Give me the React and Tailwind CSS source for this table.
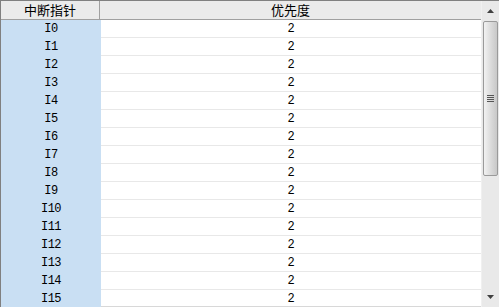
import React from "react";

const rows = Array.from({ length: 16 }, (_, i) => ({ name: `I${i}`, prio: 2 }));

const Scrollbar = () => (
  <div className="flex w-[18px] flex-col border-l border-[#f0f0f0] bg-[#e9e9e9]">
    <div className="flex h-[20px] items-center justify-center">
      <svg width="7" height="4" viewBox="0 0 7 4">
        <path d="M3.5 0 L7 4 L0 4 Z" fill="#404040" />
      </svg>
    </div>
    <div className="mx-[1px] flex h-[155px] items-center justify-center rounded-[2px] border border-[#9a9a9a] bg-gradient-to-r from-[#f2f2f2] via-[#dcdcdc] to-[#c8c8c8]">
      <div className="flex flex-col gap-[1px]">
        <div className="h-[1px] w-[7px] bg-[#555]" />
        <div className="h-[1px] w-[7px] bg-[#555]" />
        <div className="h-[1px] w-[7px] bg-[#555]" />
        <div className="h-[1px] w-[7px] bg-[#555]" />
      </div>
    </div>
    <div className="flex-1" />
    <div className="flex h-[20px] items-center justify-center">
      <svg width="7" height="4" viewBox="0 0 7 4">
        <path d="M0 0 L7 0 L3.5 4 Z" fill="#404040" />
      </svg>
    </div>
  </div>
);

export default function App() {
  const font = { fontFamily: '"Liberation Mono", "Noto Sans CJK JP", monospace' };
  const cjk = { fontFamily: '"Noto Sans CJK JP", sans-serif' };
  return (
    <div className="flex h-[307px] w-[499px] overflow-hidden border-l border-t border-[#808080] bg-white text-[12px] text-black" style={font}>
      <div className="flex flex-1 flex-col border-b border-[#d8d8d8]">
        <div className="flex h-[19px] shrink-0 border-b border-[#a0a0a0] bg-[#ebebeb] text-[13px]">
          <div className="flex w-[99px] items-center justify-center border-r border-[#a0a0a0]" style={cjk}>
            中断指针
          </div>
          <div className="flex flex-1 items-center justify-center" style={cjk}>
            优先度
          </div>
        </div>
        <div className="flex flex-col">
          {rows.map((r) => (
            <div key={r.name} className="flex h-[18px] shrink-0">
              <div className="flex w-[100px] items-center justify-center bg-[#c9dff3] tracking-[-0.5px]">{r.name}</div>
              <div className="flex flex-1 items-center justify-center border-b border-[#e8e8e8]">{r.prio}</div>
            </div>
          ))}
        </div>
      </div>
      <Scrollbar />
    </div>
  );
}
